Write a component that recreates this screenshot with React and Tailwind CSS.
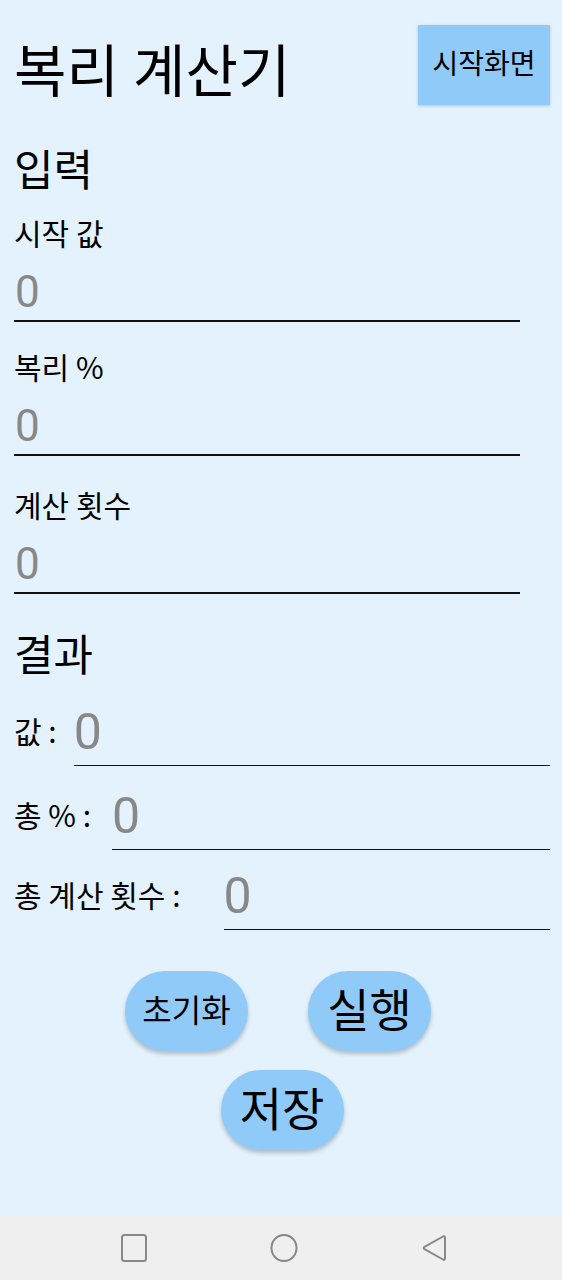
import React from "react";

const font = "font-['Roboto','Noto_Sans_CJK_KR',sans-serif]";
const cjk = "font-['Noto_Sans_CJK_KR','Roboto',sans-serif]";

// input block with label above and underline
const Field = ({ label, className = "" }) => (
  <div className={className}>
    <div className={`text-[30px] leading-[40px] text-black ${cjk}`}>{label}</div>
    <div className="mt-[12px] w-[506px] h-[58px] border-b-2 border-[#111] text-[44px] leading-[56px] text-[#888] pl-[1px]">
      0
    </div>
  </div>
);

// result row: label then underlined value
const ResultRow = ({ label, gap, className = "" }) => (
  <div className={`flex items-center ${className}`}>
    <div className={`text-[30px] leading-[40px] pb-[6px] text-black whitespace-pre ${cjk}`}>{label}</div>
    <div className={`flex-1 h-[67px] border-b border-[#111] text-[50px] leading-[66px] text-[#888] ${gap}`}>
      0
    </div>
  </div>
);

const PillButton = ({ children, size }) => (
  <button className={`w-[123px] h-[80px] rounded-full bg-[#90CAF9] text-black shadow-[0_3px_4px_rgba(0,0,0,0.22)] flex items-center justify-center ${size}`}>
    {children}
  </button>
);

export default function App() {
  return (
    <div className={`w-full h-[1280px] flex flex-col bg-[#E3F2FD] ${font}`}>
      <main className="flex-1 pl-[14px] pr-[12px]">
        {/* header */}
        <div className="flex justify-between items-start pt-[25px]">
          <h1 className="text-[57px] leading-[95px] text-black">복리 계산기</h1>
          <button className="w-[132px] h-[80px] bg-[#90CAF9] text-[28px] text-black shadow-[0_1px_3px_rgba(0,0,0,0.2)]">
            시작화면
          </button>
        </div>

        <h2 className="mt-[26px] text-[43px] leading-[50px] text-black">입력</h2>
        <Field label="시작 값" className="mt-[16px]" />
        <Field label="복리 %" className="mt-[24px]" />
        <Field label="계산 횟수" className="mt-[28px]" />

        <h2 className="mt-[37px] text-[43px] leading-[50px] text-black">결과</h2>
        <ResultRow label="값 :" gap="ml-[17px]" className="mt-[18px]" />
        <ResultRow label="총 % :" gap="ml-[21px]" className="mt-[17px]" />
        <ResultRow label="총 계산 횟수 :" gap="ml-[43px]" className="mt-[13px]" />

        <div className="mt-[41px] flex justify-center gap-[60px] mr-[8px]">
          <PillButton size="text-[32px]">초기화</PillButton>
          <PillButton size="text-[46px]">실행</PillButton>
        </div>
        <div className="mt-[19px] flex justify-center">
          <PillButton size="text-[46px]">저장</PillButton>
        </div>
      </main>

      {/* system nav bar */}
      <nav className="h-[65px] bg-[#EFEFEF] flex items-center justify-center gap-[123px] pl-[6px]">
        <svg width="26" height="28" viewBox="0 0 26 28">
          <rect x="1" y="1" width="24" height="26" rx="2.5" fill="none" stroke="#888" strokeWidth="2" />
        </svg>
        <svg width="28" height="28" viewBox="0 0 28 28">
          <ellipse cx="14" cy="14" rx="12.5" ry="13" fill="none" stroke="#888" strokeWidth="2" />
        </svg>
        <svg width="26" height="28" viewBox="0 0 26 28">
          <path d="M22 2.5 Q24 1.5 24 4 V24 Q24 26.5 22 25.5 L3.5 15.2 Q1.8 14 3.5 12.8 Z" fill="none" stroke="#888" strokeWidth="2" strokeLinejoin="round" />
        </svg>
      </nav>
    </div>
  );
}
